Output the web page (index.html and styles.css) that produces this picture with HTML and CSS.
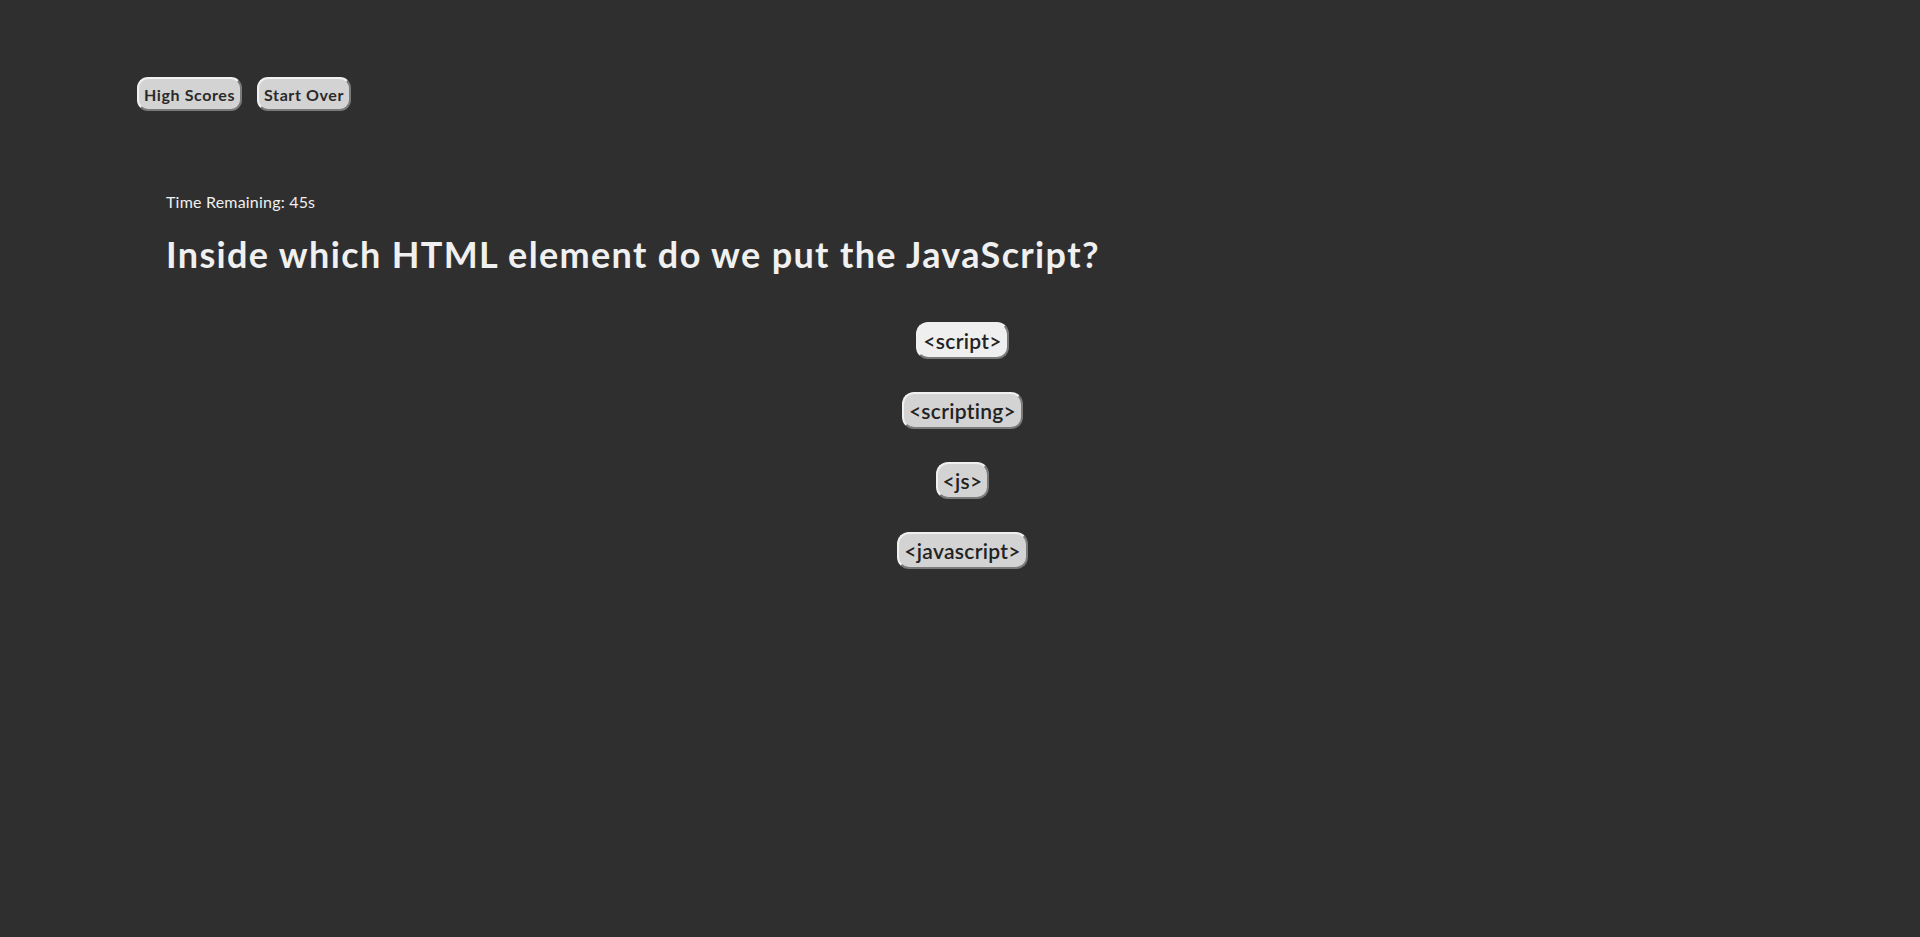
FILE: index.html
```html
<!DOCTYPE html>
<html lang="en">
<head>
<meta charset="utf-8">
<title>Code Quiz</title>
<link rel="stylesheet" href="styles.css">
</head>
<body>
<header class="topbar">
  <button class="nav-btn">High Scores</button>
  <button class="nav-btn">Start Over</button>
</header>
<main class="quiz">
  <p class="timer">Time Remaining: 45s</p>
  <h1 class="question">Inside which HTML element do we put the JavaScript?</h1>
  <div class="answers">
    <button class="answer hover">&lt;script&gt;</button>
    <button class="answer">&lt;scripting&gt;</button>
    <button class="answer">&lt;js&gt;</button>
    <button class="answer">&lt;javascript&gt;</button>
  </div>
</main>
</body>
</html>
```
FILE: styles.css
```css
html, body {
  margin: 0;
  padding: 0;
  background: #2f2f2f;
  height: 100%;
}
body {
  font-family: "Lato", "Noto Sans", sans-serif;
  color: #f0f0f0;
}
.topbar {
  display: flex;
  gap: 15px;
  padding: 77px 0 0 137px;
}
.nav-btn {
  font-family: inherit;
  font-size: 16px;
  font-weight: 700;
  letter-spacing: 0.6px;
  color: #2a2a2a;
  background: #d3d3d3;
  border: 2px solid;
  border-color: #f0f0f0 #7a7a7a #7a7a7a #f0f0f0;
  border-radius: 11px;
  height: 34px;
  padding: 0 5px;
}
.quiz {
  padding: 0 0 0 166px;
}
.timer {
  margin: 81px 0 0;
  font-size: 16px;
  line-height: 20px;
  letter-spacing: 0.2px;
}
.question {
  margin: 20px 0 0;
  font-size: 36px;
  font-weight: 700;
  line-height: 44px;
  letter-spacing: 1.35px;
}
.answers {
  display: flex;
  flex-direction: column;
  align-items: center;
  gap: 33px;
  margin: 46px 0 0 -166px;
  padding-left: 5px;
}
.answer {
  font-family: inherit;
  font-size: 21px;
  font-weight: 600;
  letter-spacing: 0.3px;
  color: #222;
  background: #d3d3d3;
  border: 2px solid;
  border-color: #f0f0f0 #7a7a7a #7a7a7a #f0f0f0;
  border-radius: 12px;
  height: 37px;
  padding: 0 5px;
}
.answer.hover {
  background: #efefef;
}
```
